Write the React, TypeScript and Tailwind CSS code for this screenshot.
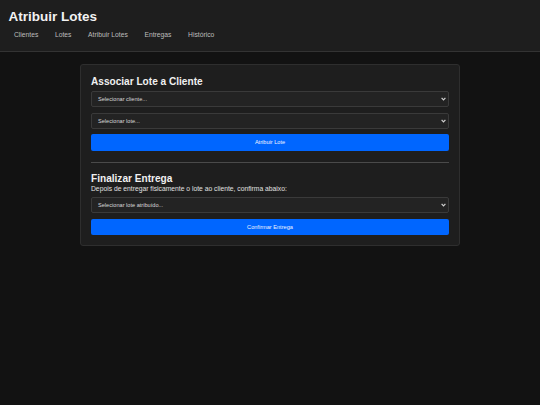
import React from "react";

function Chevron() {
  return (
    <svg width="5" height="4" viewBox="0 0 5 4" className="shrink-0">
      <path d="M0.6 0.8 L2.5 2.9 L4.4 0.8" fill="none" stroke="#d0d0d0" strokeWidth="1.2" />
    </svg>
  );
}

function SelectBox({ label, className = "" }: { label: string; className?: string }) {
  return (
    <div
      className={
        "flex h-[16.3px] items-center justify-between rounded-[2px] border border-[#3a3a3a] bg-[#232323] pl-[6px] pr-[2.5px] text-[5.62px] text-[#d8d8d8] " +
        className
      }
    >
      <span>{label}</span>
      <Chevron />
    </div>
  );
}

function PrimaryButton({ label, className = "" }: { label: string; className?: string }) {
  return (
    <button
      className={
        "flex h-[16.4px] w-full items-center justify-center rounded-[2px] bg-[#0066ff] text-[5.62px] text-[#eef3ff] " +
        className
      }
    >
      {label}
    </button>
  );
}

export default function App() {
  const links = ["Clientes", "Lotes", "Atribuir Lotes", "Entregas", "Histórico"];
  return (
    <div className="min-h-screen bg-[#121212] font-['Liberation_Sans',Arial,sans-serif]">
      <header className="h-[52px] border-b border-[#333333] bg-[#1e1e1e] px-[8.4px] pt-[8.8px]">
        <h1 className="text-[13.5px] font-bold leading-[15.1px] text-[#f2f2f2]">Atribuir Lotes</h1>
        <nav className="mt-[7.3px] flex gap-[16.6px] pl-[5.6px] text-[6.75px] leading-[7.5px] text-[#bdbdbd]">
          {links.map((l) => (
            <span key={l}>{l}</span>
          ))}
        </nav>
      </header>
      <main className="pt-[12px]">
        <section className="mx-auto w-[380px] rounded-[3px] border border-[#2e2e2e] bg-[#1e1e1e] px-[10px] pb-[10px] pt-[10.9px]">
          <h2 className="text-[10.1px] font-bold leading-[11.3px] text-[#f0f0f0]">Associar Lote a Cliente</h2>
          <SelectBox label="Selecionar cliente..." className="mt-[3.8px]" />
          <SelectBox label="Selecionar lote..." className="mt-[5.7px]" />
          <PrimaryButton label="Atribuir Lote" className="mt-[5px]" />
          <hr className="mt-[11.3px] border-t border-[#4a4a4a]" />
          <h2 className="mt-[10.5px] text-[10.1px] font-bold leading-[11.3px] text-[#f0f0f0]">Finalizar Entrega</h2>
          <p className="text-[6.75px] leading-[7.6px] text-[#e0e0e0]">
            Depois de entregar fisicamente o lote ao cliente, confirma abaixo:
          </p>
          <SelectBox label="Selecionar lote atribuído..." className="mt-[4.7px]" />
          <PrimaryButton label="Confirmar Entrega" className="mt-[5.3px]" />
        </section>
      </main>
    </div>
  );
}
